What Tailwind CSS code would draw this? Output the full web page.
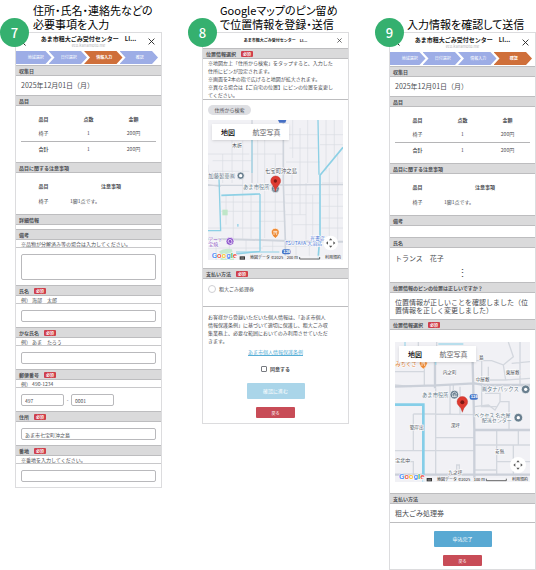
<!DOCTYPE html>
<html lang="ja">

<head>
  <meta charset="UTF-8" />
  <meta name="viewport" content="width=device-width, initial-scale=1.0" />
  <title>あま市粗大ごみ受付センター</title>
  <script src="https://cdn.jsdelivr.net/npm/@tailwindcss/browser@4"></script>
</head>

<body class="bg-white font-['Noto_Sans_CJK_JP',sans-serif] text-[5px] leading-[8px] text-[#4b4d52]">

  <main class="grid grid-cols-3 items-start gap-10 pl-[15px]">

    <!-- 7: 入力フォーム -->
    <section class="relative">
      <h2 class="flex h-8 items-end pb-px pl-[18px] text-[11px] leading-[14px] whitespace-nowrap text-black [font-feature-settings:'palt']">住所・氏名・連絡先などの<br>必要事項を入力</h2>
      <span class="absolute top-[18px] -left-[15px] z-10 flex size-[29px] items-center justify-center rounded-full bg-[#35b06f] text-[13px] font-medium text-white">7</span>

      <form class="border border-[#dcdcde]">
        <header class="relative h-[18px] pt-[2px] text-center">
          <svg class="absolute top-[4px] left-[5px] h-[9px] w-[5px]" viewBox="0 0 5 9" fill="none" stroke="#222" stroke-width="1"><path d="M4.5 .5L.7 4.5L4.5 8.5" /></svg>
          <h3 class="text-[6px] leading-[8px] font-bold whitespace-pre text-[#222]">あま市粗大ごみ受付センター　LI...</h3>
          <p class="text-[4px] leading-[5px] text-[#b5b5b8]">eco.kanamoto.me</p>
          <button type="button" aria-label="閉じる" class="absolute top-[5px] right-[6px]"><svg class="size-[7px]" viewBox="0 0 7 7" stroke="#222" stroke-width=".9"><path d="M.6 .6L6.4 6.4M6.4 .6L.6 6.4" /></svg></button>
        </header>
        <ol class="mb-px grid h-[13px] grid-cols-4 pr-[3px] text-[4px] leading-[13px] text-white">
          <li class="bg-[#9dade6] pl-[4px] text-center [clip-path:polygon(0_0,calc(100%-6px)_0,100%_50%,calc(100%-6px)_100%,0_100%)]">地域選択</li>
          <li class="-ml-[3px] bg-[#9dade6] pl-[2px] text-center [clip-path:polygon(0_0,calc(100%-6px)_0,100%_50%,calc(100%-6px)_100%,0_100%,6px_50%)]">日付選択</li>
          <li class="-ml-[3px] bg-[#cf6f3a] pl-[2px] text-center font-bold [clip-path:polygon(0_0,calc(100%-6px)_0,100%_50%,calc(100%-6px)_100%,0_100%,6px_50%)]">情報入力</li>
          <li class="-ml-[3px] bg-[#9dade6] pl-[2px] text-center [clip-path:polygon(0_0,calc(100%-6px)_0,100%_50%,calc(100%-6px)_100%,0_100%,6px_50%)]">確認</li>
        </ol>

        <h4 class="h-[11px] border-y border-[#bdbdbf] bg-[#dadadb] px-[3px] leading-[9px] font-bold">収集日</h4>
        <p class="h-[19px] px-[5px] text-[7px] leading-[19px]">2025年12月01日（月）</p>

        <h4 class="h-[11px] border-y border-[#bdbdbf] bg-[#dadadb] px-[3px] leading-[9px] font-bold">品目</h4>
        <div class="h-14 px-[5px] pt-[5px]">
          <table class="w-full table-fixed text-center">
            <thead>
              <tr class="h-[15px]"><th>品目</th><th>点数</th><th>金額</th></tr>
            </thead>
            <tbody>
              <tr class="h-[15px] border-b border-[#b5b5b7]"><td>椅子</td><td>1</td><td>200円</td></tr>
              <tr class="h-[15px]"><th>合計</th><td>1</td><td>200円</td></tr>
            </tbody>
          </table>
        </div>

        <h4 class="h-[11px] border-y border-[#bdbdbf] bg-[#dadadb] px-[3px] leading-[9px] font-bold">品目に関する注意事項</h4>
        <div class="h-[41px] px-[5px] pt-[5px]">
          <table class="w-full table-fixed">
            <thead>
              <tr class="h-[15px]"><th class="w-1/3">品目</th><th>注意事項</th></tr>
            </thead>
            <tbody>
              <tr class="h-[15px]"><td class="text-center">椅子</td><td class="pl-[4px]">1脚1点です。</td></tr>
            </tbody>
          </table>
        </div>

        <h4 class="mb-1 h-[11px] border-y border-[#bdbdbf] bg-[#dadadb] px-[3px] leading-[9px] font-bold">詳細情報</h4>

        <label for="remarks" class="block h-[11px] border-y border-[#bdbdbf] bg-[#dadadb] px-[3px] leading-[9px] font-bold">備考</label>
        <p class="h-[8px] border-b border-[#c8c8ca] px-[5px] leading-[7px]">※品物が分解済み等の場合は入力してください。</p>
        <div class="px-[5px] pt-[6px] pb-[5px]">
          <textarea id="remarks" class="block h-[26px] w-full resize-none rounded-[2px] border border-[#b9b9bc] px-[3px]"></textarea>
        </div>

        <label for="name" class="flex h-[11px] items-center gap-[5px] border-y border-[#bdbdbf] bg-[#dadadb] px-[3px] font-bold">氏名<span class="h-[6px] rounded-[1px] bg-[#cf3f4b] px-[2px] text-[4px] leading-[6px] text-white">必須</span></label>
        <p class="h-[8px] border-b border-[#c8c8ca] px-[5px] leading-[7px]">例） 海部　太郎</p>
        <div class="px-[5px] pt-[6px] pb-[5px]">
          <input id="name" type="text" class="block h-[12px] w-full rounded-[2px] border border-[#b9b9bc] px-[3px]">
        </div>

        <label for="kana" class="flex h-[11px] items-center gap-[5px] border-y border-[#bdbdbf] bg-[#dadadb] px-[3px] font-bold">かな氏名<span class="h-[6px] rounded-[1px] bg-[#cf3f4b] px-[2px] text-[4px] leading-[6px] text-white">必須</span></label>
        <p class="h-[8px] border-b border-[#c8c8ca] px-[5px] leading-[7px]">例） あま　たろう</p>
        <div class="px-[5px] pt-[6px] pb-[5px]">
          <input id="kana" type="text" class="block h-[12px] w-full rounded-[2px] border border-[#b9b9bc] px-[3px]">
        </div>

        <label for="zip1" class="flex h-[11px] items-center gap-[5px] border-y border-[#bdbdbf] bg-[#dadadb] px-[3px] font-bold">郵便番号<span class="h-[6px] rounded-[1px] bg-[#cf3f4b] px-[2px] text-[4px] leading-[6px] text-white">必須</span></label>
        <p class="h-[8px] border-b border-[#c8c8ca] px-[5px] leading-[7px]">例） 490-1234</p>
        <div class="flex items-center px-[5px] pt-[6px] pb-[5px]">
          <input id="zip1" type="text" value="497" class="h-[12px] w-[43px] rounded-[2px] border border-[#b9b9bc] px-[3px]">
          <span class="w-[7px] text-center">-</span>
          <input type="text" value="0001" aria-label="郵便番号 下4桁" class="h-[12px] w-[43px] rounded-[2px] border border-[#b9b9bc] px-[3px]">
        </div>

        <label for="address" class="flex h-[11px] items-center gap-[5px] border-y border-[#bdbdbf] bg-[#dadadb] px-[3px] font-bold">住所<span class="h-[6px] rounded-[1px] bg-[#cf3f4b] px-[2px] text-[4px] leading-[6px] text-white">必須</span></label>
        <div class="px-[5px] pt-[6px] pb-[5px]">
          <input id="address" type="text" value="あま市七宝町沖之島" class="block h-[12px] w-full rounded-[2px] border border-[#b9b9bc] px-[3px]">
        </div>

        <label for="banchi" class="flex h-[11px] items-center gap-[5px] border-y border-[#bdbdbf] bg-[#dadadb] px-[3px] font-bold">番地<span class="h-[6px] rounded-[1px] bg-[#cf3f4b] px-[2px] text-[4px] leading-[6px] text-white">必須</span></label>
        <p class="h-[8px] border-b border-[#c8c8ca] px-[5px] leading-[7px]">※番地を入力してください。</p>
        <div class="px-[5px] pt-[6px] pb-[5px]">
          <input id="banchi" type="text" class="block h-[12px] w-full rounded-[2px] border border-[#b9b9bc] px-[3px]">
        </div>
      </form>
    </section>

    <!-- 8: 位置情報 -->
    <section class="relative">
      <h2 class="flex h-8 items-end pb-px pl-[18px] text-[11px] leading-[14px] whitespace-nowrap text-black [font-feature-settings:'palt']">Googleマップのピン留め<br>で位置情報を登録・送信</h2>
      <span class="absolute top-[18px] -left-[14px] z-10 flex size-[29px] items-center justify-center rounded-full bg-[#35b06f] text-[13px] font-medium text-white">8</span>

      <form class="border border-[#dcdcde]">
        <header class="relative h-[15px] pt-[3px] text-center">
          <h3 class="text-[4px] leading-[8px] font-bold whitespace-pre text-[#222]">あま市粗大ごみ受付センター　LI...</h3>
          <button type="button" aria-label="閉じる" class="absolute top-[5px] right-[6px]"><svg class="size-[5px]" viewBox="0 0 5 5" stroke="#333" stroke-width=".7"><path d="M.4 .4L4.6 4.6M4.6 .4L.4 4.6" /></svg></button>
        </header>

        <h4 class="flex h-[11px] items-center gap-[5px] border-y border-[#bdbdbf] bg-[#dadadb] px-[3px] font-bold">位置情報選択<span class="h-[6px] rounded-[1px] bg-[#cf3f4b] px-[2px] text-[4px] leading-[6px] text-white">必須</span></h4>
        <p class="border-b border-[#bdbdbf] px-[5px] whitespace-nowrap">※地図左上「住所から検索」をタップすると、入力した<br>住所にピンが設定されます。<br>※画面を2本の指で広げると地図が拡大されます。<br>※異なる場合は【ご自宅の位置】にピンの位置を変更し<br>てください。</p>

        <div class="px-[5px] pt-[5px] pb-2">
          <button type="button" class="mb-[5px] block h-[10px] w-[43px] rounded-full bg-[#dedfe3] text-center leading-[10px]">住所から検索</button>
          <div class="relative">
            <svg class="block w-full" viewBox="36 16 405 420" fill="none" font-size="15">
              <rect x="36" y="16" width="405" height="420" fill="#f1f1f5" />
              <g stroke="#d9dce2" stroke-width="2">
                <path d="M36 118H160M50 138H168M168 118H262M80 118V205M108 78V205M140 78V240M206 75V370M238 118V370M185 75V205" />
                <path d="M268 60H365M290 16V130M312 40V205M335 16V205M280 100H365M270 142H372M288 165V375M312 205V300M330 205V375M350 240V370" />
                <path d="M74 262H190M74 290H190M90 240V330M112 240V372M140 240V372M165 240V372M36 340H190M190 262H268M190 290H268M190 320H268M268 240H372M268 265H372M268 300H330M290 330H372" />
                <path d="M390 16V170M415 16V130M372 60H441M372 90H441M400 160V375M425 120V375M378 205H441M376 240H441M376 275H441M376 310H441M376 340H441M50 170H160M36 150V200" />
                <path d="M60 372V436M100 376V436M150 376V410M230 376V410M300 385V436M340 380V436M36 400H200M200 395H372" />
              </g>
              <g stroke="#cfd4dc">
                <path stroke-width="6" d="M36 372L160 375L300 380L441 381" />
                <path stroke-width="5" d="M262 16V205L268 380V436" />
                <path stroke-width="4" d="M36 212H160L372 210H441M168 16V205M36 210L74 215" />
              </g>
              <rect x="79" y="285" width="16" height="17" fill="#bfe6c8" />
              <path d="M70 410Q85 398 108 404L114 436H74Z" fill="#c6ead0" />
              <rect x="123" y="328" width="5" height="8" fill="#a5d7ea" />
              <g stroke="#8dd0e5">
                <path stroke-width="5" d="M441 98L372 182V360L366 436M76 242L192 238" />
                <path stroke-width="4" d="M69 190L74 350M36 348H74M366 16L369 180M192 238V410M120 418L192 410" />
                <path stroke-width="3" d="M168 75V175M120 412H250" />
              </g>
              <path d="M246 16H271L268 24H250Z" fill="#456fc4" />
              <g stroke="#fff" stroke-width="3" paint-order="stroke">
                <g fill="#4a4e57">
                  <text x="108" y="96">木折</text>
                  <text x="207" y="175" font-size="16">七宝町沖之島</text>
                </g>
                <g fill="#5f7686" font-size="16">
                  <text x="37" y="190">加藤製菓㈱</text>
                  <text x="141" y="224">あま市役所</text>
                </g>
                <text fill="#8750c0"><tspan x="37" y="379">アート</tspan><tspan x="37" y="395">宝焼</tspan></text>
                <text fill="#4472d4"><tspan x="342" y="375">光書店</tspan><tspan x="268" y="391">TSUTAYA 大治店</tspan></text>
              </g>
              <g stroke="#fff" stroke-width="2">
                <circle cx="134" cy="183" r="11" fill="#697f8f" />
                <circle cx="238" cy="222" r="12" fill="#697f8f" />
                <circle cx="102" cy="380" r="12" fill="#8e57cb" />
                <path d="M226 355a12 12 0 1 1 23 2q-2 8-11 14q-10-6-12-16z" fill="#ee8a34" />
              </g>
              <circle cx="134" cy="183" r="5" fill="#fff" />
              <path d="M232 226H244M234 220V226M238 220V226M242 220V226M231 219L238 214L245 219" stroke="#fff" stroke-width="1.5" />
              <path d="M96 382q0-8 6-8t6 8t-6 4t-6-4z" stroke="#fff" stroke-width="2" />
              <path d="M232 350H244M234 350V361M242 350V361M238 350V356" stroke="#fff" stroke-width="2" />
              <path d="M238 231Q236 218 228 209A15 15 0 1 1 250 209Q241 218 238 231Z" fill="#dd3b31" stroke="#b52d26" />
              <circle cx="238" cy="199" r="5" fill="#7d1915" />
              <rect x="258" y="404" width="26" height="15" rx="6" fill="#4675c8" />
              <text x="262" y="416" font-size="12" font-weight="700" fill="#fff">126</text>
              <circle cx="404" cy="385" r="22" fill="#fff" />
              <path d="M404 371L409 377H399ZM404 399L409 393H399ZM390 385L396 380V390ZM418 385L412 380V390Z" fill="#555" />
              <text x="47" y="430" font-family="Roboto" font-size="24" font-weight="500" stroke="#fff" stroke-width="3" paint-order="stroke"><tspan fill="#4285f4">G</tspan><tspan fill="#ea4335">o</tspan><tspan fill="#fbbc05">o</tspan><tspan fill="#4285f4">g</tspan><tspan fill="#34a853">l</tspan><tspan fill="#ea4335">e</tspan></text>
              <rect x="118" y="423" width="323" height="13" fill="#f5f5f7" fill-opacity=".8" />
              <path d="M131 425H147V435H131Z" fill="#333" />
              <path d="M134 429H144M134 432H144" stroke="#ddd" />
              <g font-size="12" fill="#222">
                <text x="162" y="434">地図データ ©2025</text>
                <text x="272" y="434">200 m</text>
                <text x="387" y="434">利用規約</text>
              </g>
              <path d="M311 427V433H371V427" stroke="#222" stroke-width="2" />
            </svg>
            <div class="absolute top-[4px] left-[4px] flex h-[16px] bg-white text-[7px] leading-[16px] shadow-sm">
              <button type="button" class="w-[32px] font-medium text-black">地図</button>
              <button type="button" class="w-[45px] text-[#5f6064]">航空写真</button>
            </div>
          </div>
        </div>

        <h4 class="flex h-[11px] items-center gap-[5px] border-y border-[#bdbdbf] bg-[#dadadb] px-[3px] font-bold">支払い方法<span class="h-[6px] rounded-[1px] bg-[#cf3f4b] px-[2px] text-[4px] leading-[6px] text-white">必須</span></h4>
        <div class="h-7 border-b border-[#bdbdbf] px-[5px] pt-[6px]">
          <label class="flex items-center gap-[3px]"><input type="radio" name="payment" class="size-[8px] appearance-none rounded-full border border-[#cfcfd3]">粗大ごみ処理券</label>
        </div>

        <div class="flex flex-col items-center px-[5px] pt-[6px] pb-[5px]">
          <p class="self-start whitespace-nowrap">お客様から登録いただいた個人情報は、「あま市個人<br>情報保護条例」に基づいて適切に保護し、粗大ごみ収<br>集業務上、必要な範囲においてのみ利用させていただ<br>きます。</p>
          <a href="#" class="mt-[3px] text-[#58aed6] underline">あま市個人情報保護条例</a>
          <label class="mt-[9px] flex items-center gap-[3px] font-bold"><input type="checkbox" class="size-[6px] appearance-none rounded-[1px] border border-[#777a80] bg-white">同意する</label>
          <button type="button" class="mt-[10px] h-[16px] w-[58px] rounded-[1px] bg-[#aad5e9] text-white">確認に進む</button>
          <button type="button" class="mt-[8px] h-[11px] w-[39px] rounded-[1px] bg-[#c84c57] text-[4px] text-white">戻る</button>
        </div>
      </form>
    </section>

    <!-- 9: 確認 -->
    <section class="relative">
      <h2 class="flex h-8 items-end pb-px pl-[18px] text-[11px] leading-[14px] whitespace-nowrap text-black [font-feature-settings:'palt']">入力情報を確認して送信</h2>
      <span class="absolute top-[18px] -left-[14px] z-10 flex size-[29px] items-center justify-center rounded-full bg-[#35b06f] text-[13px] font-medium text-white">9</span>

      <form class="border border-[#dcdcde]">
        <header class="relative h-[19px] pt-[3px] text-center">
          <svg class="absolute top-[4px] left-[5px] h-[9px] w-[5px]" viewBox="0 0 5 9" fill="none" stroke="#222" stroke-width="1"><path d="M4.5 .5L.7 4.5L4.5 8.5" /></svg>
          <h3 class="text-[6px] leading-[8px] font-bold whitespace-pre text-[#222]">あま市粗大ごみ受付センター　LI...</h3>
          <p class="text-[4px] leading-[5px] text-[#b5b5b8]">eco.kanamoto.me</p>
          <button type="button" aria-label="閉じる" class="absolute top-[6px] right-[6px]"><svg class="size-[7px]" viewBox="0 0 7 7" stroke="#222" stroke-width=".9"><path d="M.6 .6L6.4 6.4M6.4 .6L.6 6.4" /></svg></button>
        </header>
        <ol class="mb-px grid h-[13px] grid-cols-4 pr-[3px] text-[4px] leading-[13px] text-white">
          <li class="bg-[#9dade6] pl-[4px] text-center [clip-path:polygon(0_0,calc(100%-6px)_0,100%_50%,calc(100%-6px)_100%,0_100%)]">地域選択</li>
          <li class="-ml-[3px] bg-[#9dade6] pl-[2px] text-center [clip-path:polygon(0_0,calc(100%-6px)_0,100%_50%,calc(100%-6px)_100%,0_100%,6px_50%)]">日付選択</li>
          <li class="-ml-[3px] bg-[#9dade6] pl-[2px] text-center [clip-path:polygon(0_0,calc(100%-6px)_0,100%_50%,calc(100%-6px)_100%,0_100%,6px_50%)]">情報入力</li>
          <li class="-ml-[3px] bg-[#cf6f3a] pl-[2px] text-center font-bold [clip-path:polygon(0_0,calc(100%-6px)_0,100%_50%,calc(100%-6px)_100%,0_100%,6px_50%)]">確認</li>
        </ol>

        <h4 class="h-[11px] border-y border-[#bdbdbf] bg-[#dadadb] px-[3px] leading-[9px] font-bold">収集日</h4>
        <p class="h-[19px] px-[5px] text-[7px] leading-[19px]">2025年12月01日（月）</p>

        <h4 class="h-[11px] border-y border-[#bdbdbf] bg-[#dadadb] px-[3px] leading-[9px] font-bold">品目</h4>
        <div class="h-14 px-[5px] pt-[5px]">
          <table class="w-full table-fixed text-center">
            <thead>
              <tr class="h-[15px]"><th>品目</th><th>点数</th><th>金額</th></tr>
            </thead>
            <tbody>
              <tr class="h-[15px] border-b border-[#b5b5b7]"><td>椅子</td><td>1</td><td>200円</td></tr>
              <tr class="h-[15px]"><th>合計</th><td>1</td><td>200円</td></tr>
            </tbody>
          </table>
        </div>

        <h4 class="h-[11px] border-y border-[#bdbdbf] bg-[#dadadb] px-[3px] leading-[9px] font-bold">品目に関する注意事項</h4>
        <div class="h-[41px] px-[5px] pt-[5px]">
          <table class="w-full table-fixed">
            <thead>
              <tr class="h-[15px]"><th class="w-1/3">品目</th><th>注意事項</th></tr>
            </thead>
            <tbody>
              <tr class="h-[15px]"><td class="text-center">椅子</td><td class="pl-[4px]">1脚1点です。</td></tr>
            </tbody>
          </table>
        </div>

        <h4 class="mb-[11px] h-[11px] border-y border-[#bdbdbf] bg-[#dadadb] px-[3px] leading-[9px] font-bold">備考</h4>

        <h4 class="h-[11px] border-y border-[#bdbdbf] bg-[#dadadb] px-[3px] leading-[9px] font-bold">氏名</h4>
        <p class="h-[19px] px-[5px] text-[7px] leading-[20px]">トランス　花子</p>
        <p class="h-[15px] text-center text-[11px] leading-[10px]">⋮</p>

        <h4 class="h-[11px] border-y border-[#bdbdbf] bg-[#dadadb] px-[3px] leading-[9px] font-bold">位置情報のピンの位置は正しいですか？</h4>
        <p class="h-[26px] px-[5px] pt-[5px] text-[7px] leading-[8px]">位置情報が正しいことを確認しました（位置情報を正しく変更しました）</p>

        <h4 class="flex h-[11px] items-center gap-[5px] border-y border-[#bdbdbf] bg-[#dadadb] px-[3px] font-bold">位置情報選択<span class="h-[6px] rounded-[1px] bg-[#cf3f4b] px-[2px] text-[4px] leading-[6px] text-white">必須</span></h4>
        <div class="px-[5px] pt-[12px] pb-[11px]">
          <div class="relative">
            <svg class="block w-full" viewBox="30 36 405 420" fill="none" font-size="14">
              <rect x="30" y="36" width="405" height="420" fill="#f1f1f5" />
              <g stroke="#d3d7de" stroke-width="4">
                <path d="M30 125H118V80M118 88H155M155 36V90M100 36V80M118 125V165M30 165L80 170" />
                <path d="M275 92H320L355 105L362 150H290V230H335M355 105L385 80L370 36M290 85V165M362 150L435 145M380 100L435 95M405 36V165M310 110V145" />
                <path d="M195 165V252M152 175V436M85 252H152L268 254M85 252V360M30 362H268M152 323H268M205 165V190M225 170V252" />
                <path d="M268 230L310 225L330 240L345 215H372V300M300 190H345V215M335 300V436M268 345H435M335 395H435M400 300V345M385 345V436M30 395H85V436M215 436V405H223V436M268 420H335" />
              </g>
              <g stroke="#cbd0d9" stroke-width="7">
                <path d="M30 170L152 166L268 160L300 165H435M150 75V175M262 60L268 300V456M268 300H435M30 434H435" />
              </g>
              <path stroke="#85cee8" stroke-width="8" d="M30 224L115 224V456" />
              <path stroke="#a7d9ea" stroke-width="4" d="M160 42H235M60 36V48M152 75V105" />
              <g stroke="#fff" stroke-width="3" paint-order="stroke">
                <g fill="#4a4e57">
                  <text x="282" y="88">島</text>
                  <text x="173" y="132">内之町</text>
                  <text x="272" y="153">中屋敷</text>
                  <text x="362" y="133">東屋敷</text>
                  <text x="74" y="298">築岸出</text>
                  <text x="197" y="291">深坪</text>
                  <text x="330" y="370">安無</text>
                  <text x="190" y="433">九之坪</text>
                  <text x="31" y="397" font-size="15">宝北中</text>
                </g>
                <text x="31" y="109" font-size="16" fill="#dd7d32">みちくさ</text>
                <g font-size="16" fill="#5f7686">
                  <text x="111" y="201">あま市役所</text>
                  <text x="290" y="184">㈱タナパックス</text>
                  <text font-size="15"><tspan x="268" y="260">ベクセス 名古屋</tspan><tspan x="290" y="277">配送センター</tspan></text>
                </g>
              </g>
              <g stroke="#fff" stroke-width="2">
                <path d="M103 101a12 12 0 1 1 24 0q-2 9-12 16q-10-6-12-16z" fill="#ee8a34" />
                <circle cx="208" cy="194" r="13" fill="#697f8f" />
                <circle cx="422" cy="178" r="13" fill="#697f8f" />
                <circle cx="400" cy="263" r="13" fill="#697f8f" />
              </g>
              <path d="M109 97H121M111 97V108M119 97V108M115 97V103M201 200H215M203 193V200M208 193V200M213 193V200M200 192L208 186L216 192" stroke="#fff" stroke-width="2" />
              <circle cx="422" cy="178" r="5" fill="#fff" />
              <circle cx="400" cy="263" r="5" fill="#fff" />
              <rect x="254" y="193" width="25" height="16" rx="6" fill="#4675c8" />
              <text x="257" y="205" font-size="12" font-weight="700" fill="#fff">126</text>
              <path d="M232 247Q230 234 220 226A16 16 0 1 1 244 226Q235 234 232 247Z" fill="#dd3b31" stroke="#b52d26" />
              <circle cx="232" cy="217" r="6" fill="#7d1915" />
              <circle cx="399" cy="405" r="24" fill="#fff" />
              <path d="M399 391L404 397H394ZM399 419L404 413H394ZM385 405L391 400V410ZM413 405L407 400V410Z" fill="#555" />
              <text x="42" y="448" font-family="Roboto" font-size="24" font-weight="500" stroke="#fff" stroke-width="3" paint-order="stroke"><tspan fill="#4285f4">G</tspan><tspan fill="#ea4335">o</tspan><tspan fill="#fbbc05">o</tspan><tspan fill="#4285f4">g</tspan><tspan fill="#34a853">l</tspan><tspan fill="#ea4335">e</tspan></text>
              <rect x="112" y="443" width="323" height="13" fill="#f5f5f7" fill-opacity=".8" />
              <path d="M125 444H141V454H125Z" fill="#333" />
              <path d="M128 448H138M128 451H138" stroke="#ddd" />
              <g font-size="12" fill="#222">
                <text x="156" y="453">地図データ ©2025</text>
                <text x="266" y="453">100 m</text>
                <text x="381" y="453">利用規約</text>
              </g>
              <path d="M304 446V452H364V446" stroke="#222" stroke-width="2" />
            </svg>
            <div class="absolute top-[4px] left-[4px] flex h-[16px] bg-white text-[7px] leading-[16px] shadow-sm">
              <button type="button" class="w-[32px] font-medium text-black">地図</button>
              <button type="button" class="w-[45px] text-[#5f6064]">航空写真</button>
            </div>
          </div>
        </div>

        <h4 class="h-[11px] border-y border-[#bdbdbf] bg-[#dadadb] px-[3px] leading-[9px] font-bold">支払い方法</h4>
        <p class="h-[19px] border-b border-[#bdbdbf] px-[5px] text-[7px] leading-[18px]">粗大ごみ処理券</p>

        <div class="flex flex-col items-center pt-[8px] pb-[3px]">
          <button type="button" class="h-[16px] w-[58px] rounded-[1px] bg-[#59a9d3] text-white">申込完了</button>
          <button type="button" class="mt-[8px] h-[11px] w-[39px] rounded-[1px] bg-[#c84c57] text-[4px] text-white">戻る</button>
        </div>
      </form>
    </section>

  </main>
</body>

</html>
